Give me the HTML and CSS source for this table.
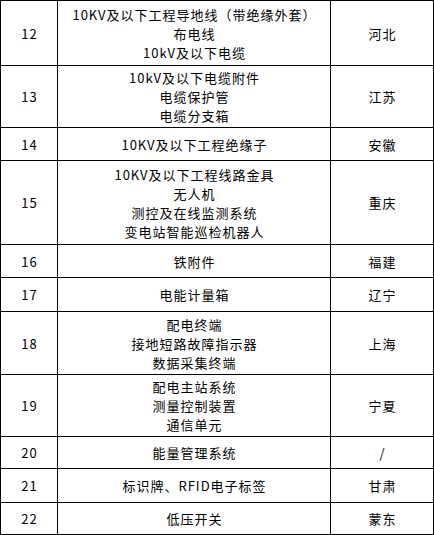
FILE: index.html
```html
<!DOCTYPE html>
<html lang="zh">
<head>
<meta charset="utf-8">
<link rel="stylesheet" href="styles.css">
</head>
<body>
<div class="table">
  <div class="cell">12</div>
  <div class="cell"><div class="lines"><span class="line">10KV及以下工程导地线（带绝缘外套）</span><span class="line">布电线</span><span class="line">10kV及以下电缆</span></div></div>
  <div class="cell">河北</div>

  <div class="cell">13</div>
  <div class="cell"><div class="lines"><span class="line">10kV及以下电缆附件</span><span class="line">电缆保护管</span><span class="line">电缆分支箱</span></div></div>
  <div class="cell">江苏</div>

  <div class="cell">14</div>
  <div class="cell">10KV及以下工程绝缘子</div>
  <div class="cell">安徽</div>

  <div class="cell">15</div>
  <div class="cell"><div class="lines"><span class="line">10KV及以下工程线路金具</span><span class="line">无人机</span><span class="line">测控及在线监测系统</span><span class="line">变电站智能巡检机器人</span></div></div>
  <div class="cell">重庆</div>

  <div class="cell">16</div>
  <div class="cell">铁附件</div>
  <div class="cell">福建</div>

  <div class="cell">17</div>
  <div class="cell">电能计量箱</div>
  <div class="cell">辽宁</div>

  <div class="cell">18</div>
  <div class="cell"><div class="lines"><span class="line">配电终端</span><span class="line">接地短路故障指示器</span><span class="line">数据采集终端</span></div></div>
  <div class="cell">上海</div>

  <div class="cell">19</div>
  <div class="cell"><div class="lines"><span class="line">配电主站系统</span><span class="line">测量控制装置</span><span class="line">通信单元</span></div></div>
  <div class="cell">宁夏</div>

  <div class="cell">20</div>
  <div class="cell">能量管理系统</div>
  <div class="cell">/</div>

  <div class="cell">21</div>
  <div class="cell">标识牌、RFID电子标签</div>
  <div class="cell">甘肃</div>

  <div class="cell">22</div>
  <div class="cell">低压开关</div>
  <div class="cell">蒙东</div>
</div>
</body>
</html>
```

FILE: styles.css
```css
html, body {
  margin: 0;
  padding: 0;
  background: #fff;
}

.table {
  display: grid;
  grid-template-columns: 56px 272px 102px;
  grid-template-rows: 64px 61px 32px 83px 32px 33px 62px 61px 31px 33px 31px;
  gap: 1px;
  padding: 1px;
  width: 434px;
  box-sizing: border-box;
  background: #000;
  font-family: "Noto Sans CJK SC", "Noto Sans", sans-serif;
  font-size: 13px;
  letter-spacing: 1px;
  line-height: 19px;
  color: #000;
}

.cell {
  background: #fff;
  display: flex;
  align-items: center;
  justify-content: center;
  text-align: center;
  padding-left: 1px;
}

.lines {
  display: flex;
  flex-direction: column;
  align-items: center;
}

.line {
  display: block;
  height: 19px;
  line-height: 19px;
  white-space: nowrap;
}
```
